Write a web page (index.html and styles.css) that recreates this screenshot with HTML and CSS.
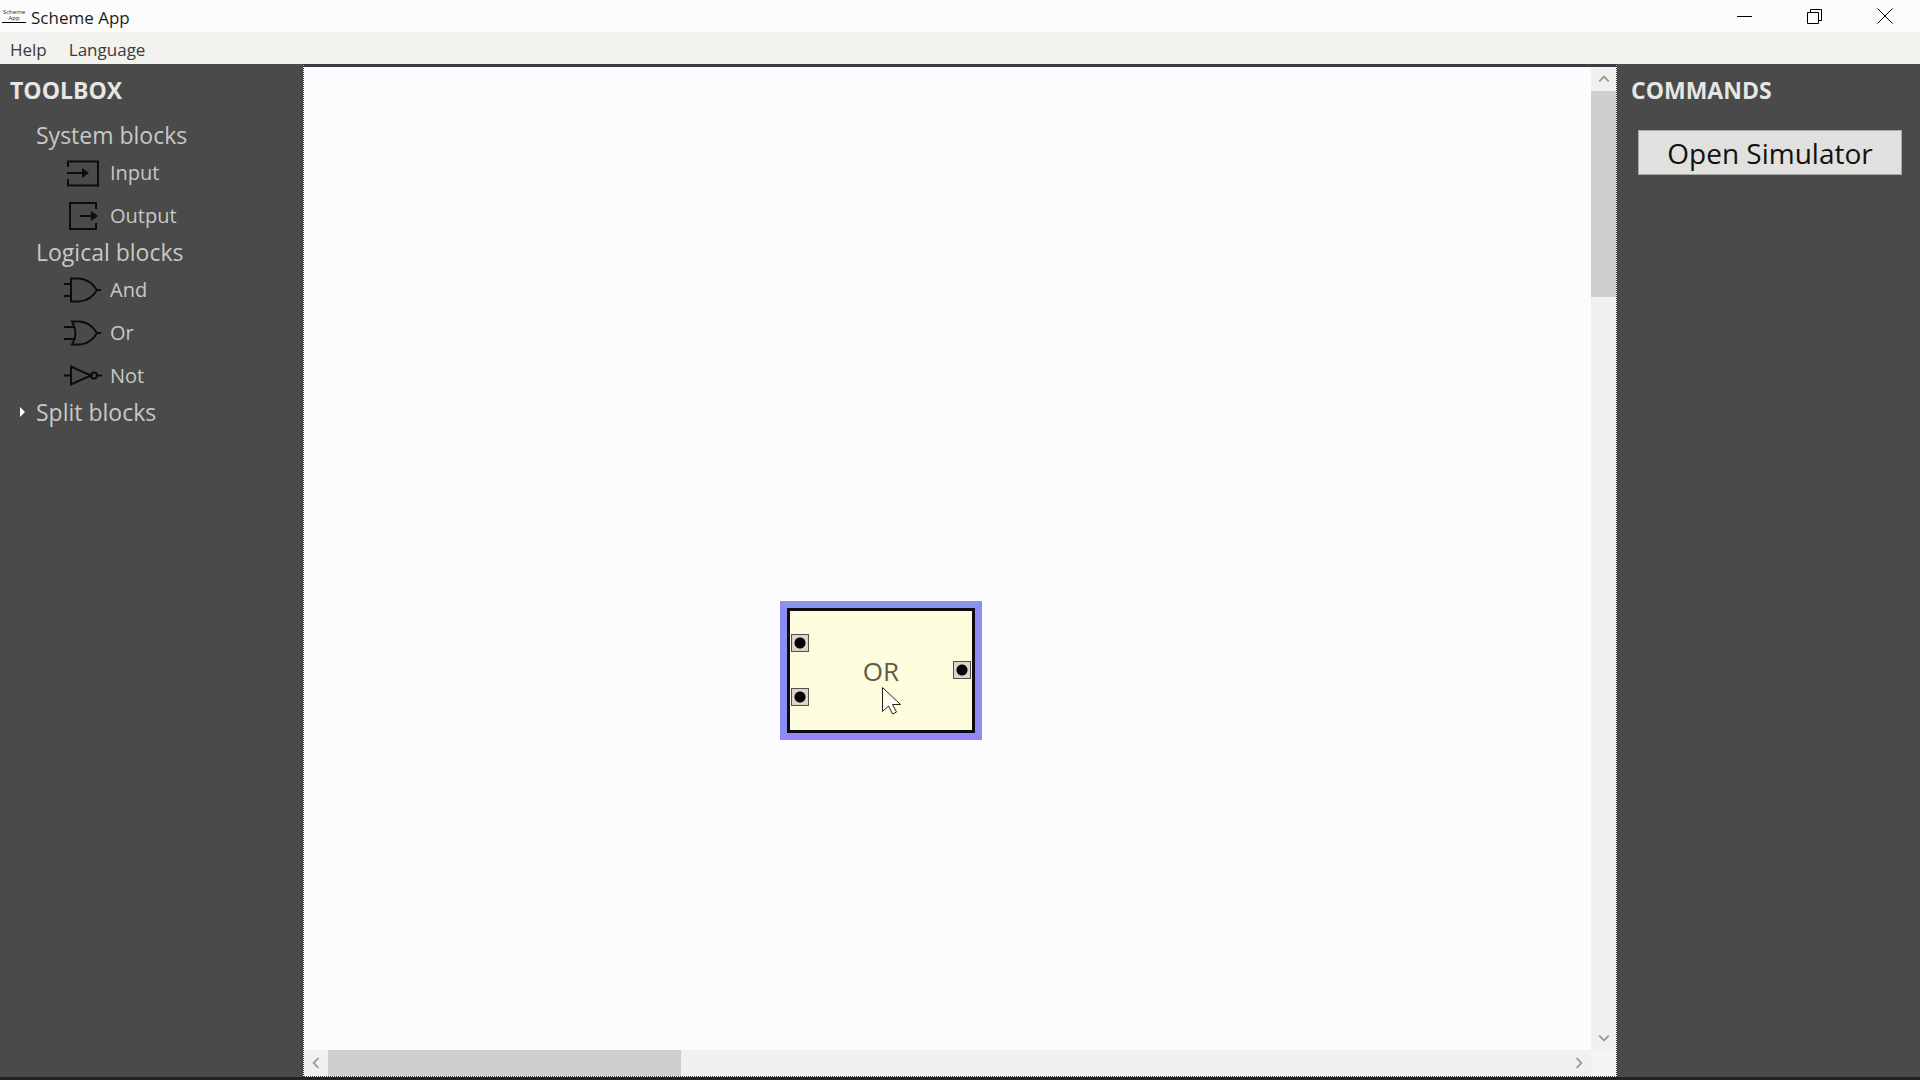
FILE: index.html
```html
<!DOCTYPE html>
<html lang="en">
<head>
<meta charset="utf-8">
<title>Scheme App</title>
<link rel="stylesheet" href="styles.css">
</head>
<body>
<div class="app">
  <header class="titlebar">
    <div class="logo" aria-hidden="true"><span>Scheme</span><span>App</span></div>
    <h1 class="title">Scheme App</h1>
    <div class="window-controls">
      <button type="button" class="window-button" aria-label="Minimize"><svg width="16" height="16" viewBox="0 0 16 16"><path d="M0 8.500h15"/></svg></button>
      <button type="button" class="window-button" aria-label="Restore"><svg width="16" height="16" viewBox="0 0 16 16"><path d="M.5 4.500h11v11H.5zM3.500 4.500V1.500h11v11h-3"/></svg></button>
      <button type="button" class="window-button" aria-label="Close"><svg width="16" height="16" viewBox="0 0 16 16"><path d="M.5.5l15 15M15.500.5l-15 15"/></svg></button>
    </div>
  </header>
  <nav class="menubar">
    <button type="button" class="menu">Help</button>
    <button type="button" class="menu">Language</button>
  </nav>
  <main class="workspace">
    <aside class="panel">
      <h2 class="panel-title">TOOLBOX</h2>
      <details class="group" open>
        <summary class="group-name">System blocks</summary>
        <ul class="blocks">
          <li class="block"><svg class="icon" viewBox="0 0 38 30"><path d="M4 9V3.500h30v24H4V21M3 15h18"/><path class="solid" d="M18 10l7 5-7 5z"/></svg>Input</li>
          <li class="block"><svg class="icon" viewBox="0 0 38 30"><path d="M32 8V2H6v26h26v-6M16 15h13"/><path class="solid" d="M27 10l7 5-7 5z"/></svg>Output</li>
        </ul>
      </details>
      <details class="group" open>
        <summary class="group-name">Logical blocks</summary>
        <ul class="blocks">
          <li class="block"><svg class="icon" viewBox="0 0 38 30"><path d="M7 3.500h8C23 4 29 9 33 15c-4 7-10 11-18 11.500H7zM0 9h7M0 21h7M33 15h4"/></svg>And</li>
          <li class="block"><svg class="icon" viewBox="0 0 38 30"><path d="M8 3.500h8C24 4 29 9 33 15c-4 7-9 11-17 11.500H8q7-11 0-23zM0 9h11M0 21h11M33 15h4"/></svg>Or</li>
          <li class="block"><svg class="icon" viewBox="0 0 38 30"><path d="M7 5.500v18L27 14.500zM0 14.500h7M33 14.500h5"/><circle cx="30" cy="14.500" r="3"/></svg>Not</li>
        </ul>
      </details>
      <details class="group collapsed">
        <summary class="group-name">Split blocks</summary>
      </details>
    </aside>
    <section class="scroll-view" aria-label="Scheme">
      <div class="canvas">
        <div class="node">
          <span class="node-label">OR</span>
          <i class="port in-a"></i><i class="port in-b"></i><i class="port out"></i>
        </div>
        <svg class="cursor" width="19" height="28" viewBox="0 0 19 28"><path d="M.5.5v24l6-5.500 4 8 4-2-4-7.500h8z"/></svg>
      </div>
      <div class="scrollbar vertical">
        <svg class="arrow" viewBox="0 0 10 10"><path d="M1 7l4-4 4 4"/></svg>
        <div class="track"><div class="thumb"></div></div>
        <svg class="arrow" viewBox="0 0 10 10"><path d="M1 3l4 4 4-4"/></svg>
      </div>
      <div class="scrollbar horizontal">
        <svg class="arrow" viewBox="0 0 10 10"><path d="M7 1L3 5l4 4"/></svg>
        <div class="track"><div class="thumb"></div></div>
        <svg class="arrow" viewBox="0 0 10 10"><path d="M3 1l4 4-4 4"/></svg>
      </div>
      <div class="corner"></div>
    </section>
    <aside class="panel commands">
      <h2 class="panel-title">COMMANDS</h2>
      <button type="button" class="command">Open Simulator</button>
    </aside>
  </main>
</div>
</body>
</html>
```
FILE: styles.css
```css
* { box-sizing: border-box; }

body {
  margin: 0;
  font-family: "Segoe UI", "Open Sans", "Noto Sans", sans-serif;
  font-size: 17px;
  color: #1c1c1c;
}

button { font: inherit; color: inherit; border: 0; background: none; }

.app { display: flex; flex-direction: column; height: 100vh; }

.titlebar {
  display: flex;
  align-items: center;
  height: 32px;
  flex: none;
  padding-left: 2px;
  background: #fcfcfc;
}

.logo {
  display: flex;
  flex-direction: column;
  align-items: center;
  width: 24px;
  margin-right: 5px;
  border-bottom: 1px solid #000;
  font-size: 6px;
  line-height: 6px;
  padding-bottom: 1px;
}

.title { margin: 0; padding-top: 3px; font-size: 17px; font-weight: 400; line-height: 24px; }

.window-controls { display: flex; margin-left: auto; }
.window-button {
  display: flex;
  align-items: center;
  justify-content: center;
  width: 70px;
  height: 32px;
  padding: 0;
}
.window-button svg { fill: none; stroke: #000; }

.menubar {
  display: flex;
  align-items: center;
  gap: 2px;
  flex: none;
  height: 32px;
  background: #f2f2ef;
}
.menu { padding: 3px 10px 0; line-height: 24px; color: #3a3a3a; }

.workspace {
  display: grid;
  grid-template-columns: 303px minmax(0, 1fr) 303px;
  flex: 1;
  min-height: 0;
  padding-bottom: 3px;
  background: #222;
}

.panel { padding: 12px 10px; background: #4a4a4a; color: #c8c8c4; }
.commands { padding-left: 14px; }

.panel-title {
  margin: 0 0 16px;
  font-size: 23px;
  line-height: 28px;
  font-weight: 700;
  color: #e6e6e2;
}
.commands .panel-title { margin-bottom: 26px; }

.group-name {
  position: relative;
  padding-left: 26px;
  font-size: 23px;
  line-height: 31px;
  list-style: none;
}
.collapsed .group-name::before {
  content: "";
  position: absolute;
  left: 10px;
  top: 10px;
  border: 5px solid transparent;
  border-left-color: #fff;
  border-right-width: 0;
}

.blocks { margin: 0; padding: 0 0 0 54px; list-style: none; }
.block {
  display: flex;
  align-items: center;
  gap: 8px;
  height: 43px;
  font-size: 20px;
}
.icon { width: 38px; height: 30px; fill: none; stroke: #0c0c0c; stroke-width: 2; }
.icon .solid { fill: #0c0c0c; stroke: none; }

.scroll-view {
  display: grid;
  grid-template-columns: minmax(0, 1fr) 25px;
  grid-template-rows: minmax(0, 1fr) 26px;
  min-height: 0;
  border: 1px dotted #333;
  border-top: 3px solid #3c3c44;
  background: #fcfcfc;
}

.canvas { position: relative; overflow: hidden; background: #fcfcfe; }

.node {
  position: absolute;
  left: 476px;
  top: 534px;
  display: flex;
  align-items: center;
  justify-content: center;
  width: 202px;
  height: 139px;
  border: 7px solid #8b8cf5;
  border-top-color: #8797ee;
  border-bottom-color: #9384f8;
  background: #fdfdde;
  box-shadow: inset 0 0 0 3px #0b0b12;
}
.node-label { font-size: 26px; line-height: 32px; color: #5c5c48; }

.port {
  position: absolute;
  width: 18px;
  height: 18px;
  border: 1px solid #55504c;
  background: radial-gradient(circle, #000 5px, #ddd3cd 6px);
}
.in-a { left: 4px; top: 26px; }
.in-b { left: 4px; top: 80px; }
.out { right: 4px; top: 53px; }

.cursor { position: absolute; left: 578px; top: 620px; fill: #fffff4; stroke: #222; }

.scrollbar { display: flex; align-items: center; background: #f0f0ee; }
.vertical { flex-direction: column; }
.arrow { flex: none; width: 12px; height: 12px; margin: 6px; fill: none; stroke: #999; stroke-width: 1.500; }
.track { flex: 1; align-self: stretch; }
.thumb { background: #cfcfcf; }
.vertical .thumb { height: 22%; }
.horizontal .thumb { width: 28.500%; height: 100%; }
.corner { background: #f4f4f2; }

.command {
  display: block;
  width: 264px;
  height: 45px;
  margin-left: 7px;
  padding: 0;
  border: 1px solid #a8a8a8;
  background: #e0e0de;
  font-size: 28px;
  line-height: 40px;
  color: #111;
}
```
